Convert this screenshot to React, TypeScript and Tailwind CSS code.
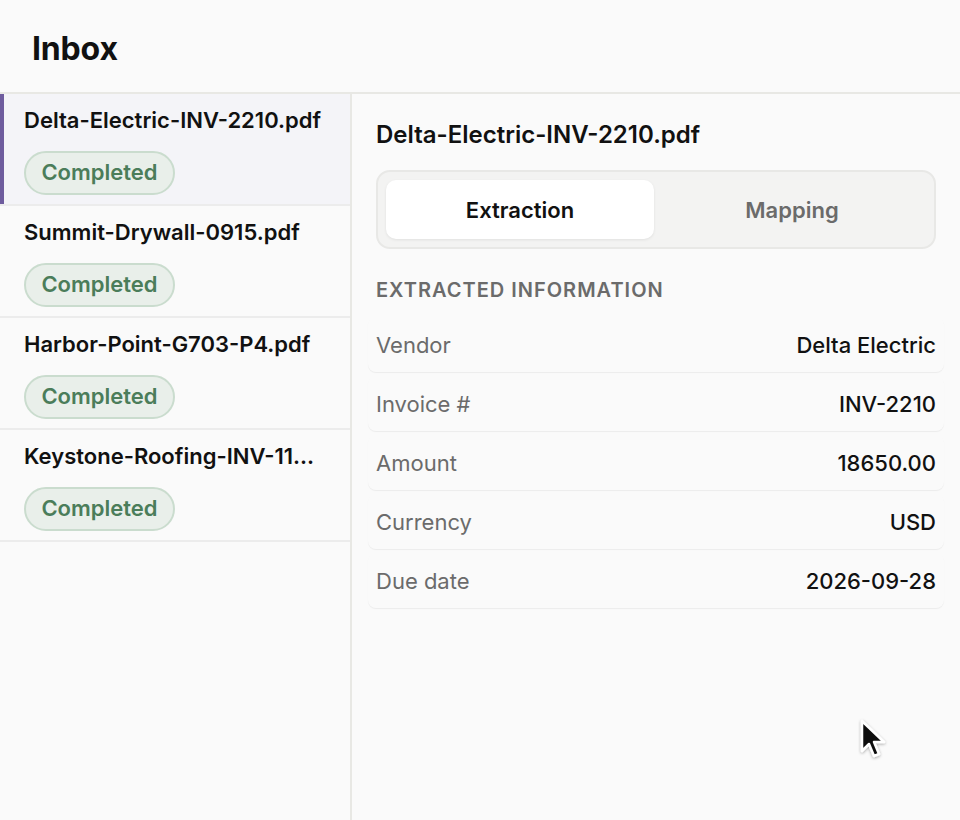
import React, { useState } from 'react';

interface Doc {
  id: string;
  name: string;
  status: 'completed';
}

const docs: Doc[] = [
  { id: '1', name: 'Delta-Electric-INV-2210.pdf', status: 'completed' },
  { id: '2', name: 'Summit-Drywall-0915.pdf', status: 'completed' },
  { id: '3', name: 'Harbor-Point-G703-P4.pdf', status: 'completed' },
  { id: '4', name: 'Keystone-Roofing-INV-1187.pdf', status: 'completed' },
];

const fields = [
  { label: 'Vendor', value: 'Delta Electric' },
  { label: 'Invoice #', value: 'INV-2210' },
  { label: 'Amount', value: '18650.00' },
  { label: 'Currency', value: 'USD' },
  { label: 'Due date', value: '2026-09-28' },
];

const App: React.FC = () => {
  const [selected, setSelected] = useState('1');
  const [tab, setTab] = useState<'extraction' | 'mapping'>('extraction');

  return (
    <div
      className="relative h-[820px] w-[960px] overflow-hidden bg-[#fafafa] text-[#111]"
      style={{ fontFamily: 'Inter, "Noto Sans", sans-serif' }}
    >
      {/* Header */}
      <div className="flex h-[94px] items-center border-b-2 border-[#e8e8e4] px-8 pt-[5px]">
        <h1 className="text-[32px] font-bold tracking-[-0.005em]">Inbox</h1>
      </div>

      <div className="flex h-[726px]">
        {/* List */}
        <div className="w-[352px] shrink-0 border-r-2 border-[#e8e8e4]">
          {docs.map((doc) => {
            const active = doc.id === selected;
            return (
              <button
                key={doc.id}
                onClick={() => setSelected(doc.id)}
                className={`flex h-[112px] w-full flex-col items-start border-b-2 border-[#ececec] px-6 pt-[11px] text-left ${
                  active ? 'bg-[#f4f4f8] shadow-[inset_4px_0_0_#6e5c9e]' : ''
                }`}
              >
                <div className="w-full truncate text-[22px] font-semibold leading-[30px]">{doc.name}</div>
                <span className="mt-[16px] inline-flex h-[44px] w-[151px] items-center justify-center rounded-full border-2 border-[#cadcce] bg-[#e9efea] pb-[2px] text-[22px] font-semibold text-[#4b7d5a]">
                  Completed
                </span>
              </button>
            );
          })}
        </div>

        {/* Detail */}
        <div className="flex-1 px-6 pt-[25px]">
          <h2 className="text-[24px] font-semibold leading-[32px]">Delta-Electric-INV-2210.pdf</h2>

          <div className="mt-[19px] grid h-[79px] grid-cols-2 gap-1 rounded-[14px] border-2 border-[#e8e8e6] bg-[#f3f3f2] p-2">
            <button
              onClick={() => setTab('extraction')}
              className={`rounded-[10px] pt-[2px] text-[22px] font-semibold ${
                tab === 'extraction' ? 'bg-white text-[#111] shadow-[0_1px_3px_rgba(0,0,0,0.08)]' : 'text-[#6b6b6b]'
              }`}
            >
              Extraction
            </button>
            <button
              onClick={() => setTab('mapping')}
              className={`rounded-[10px] pt-[2px] text-[22px] font-semibold ${
                tab === 'mapping' ? 'bg-white text-[#111] shadow-[0_1px_3px_rgba(0,0,0,0.08)]' : 'text-[#6b6b6b]'
              }`}
            >
              Mapping
            </button>
          </div>

          <div className="mt-[28px] text-[20px] font-semibold uppercase leading-[26px] tracking-[0.05em] text-[#6b6b6b]">
            Extracted information
          </div>

          <div className="-mx-2 mt-[14px] flex flex-col gap-1">
            {fields.map((f) => (
              <div
                key={f.label}
                className="flex items-center justify-between rounded-lg px-2 pt-[15px] pb-[13px] leading-[27px] shadow-[0_1px_1px_rgba(0,0,0,0.06)]"
              >
                <span className="text-[22px] text-[#6b6b6b]">{f.label}</span>
                <span className="text-[22px] font-medium text-[#111]">{f.value}</span>
              </div>
            ))}
          </div>
        </div>
      </div>

      {/* Mouse cursor */}
      <svg className="pointer-events-none absolute left-[858px] top-[718px]" width="40" height="48" viewBox="0 0 40 48">
        <defs>
          <filter id="cs" x="-30%" y="-30%" width="160%" height="160%">
            <feDropShadow dx="0" dy="1" stdDeviation="1.5" floodOpacity="0.35" />
          </filter>
        </defs>
        <path
          d="M4 3 L4 33 L11 26 L16 38 L21 36 L16 24 L26 24 Z"
          fill="#111"
          stroke="#fff"
          strokeWidth="2.5"
          strokeLinejoin="round"
          filter="url(#cs)"
        />
      </svg>
    </div>
  );
};

export default App;
